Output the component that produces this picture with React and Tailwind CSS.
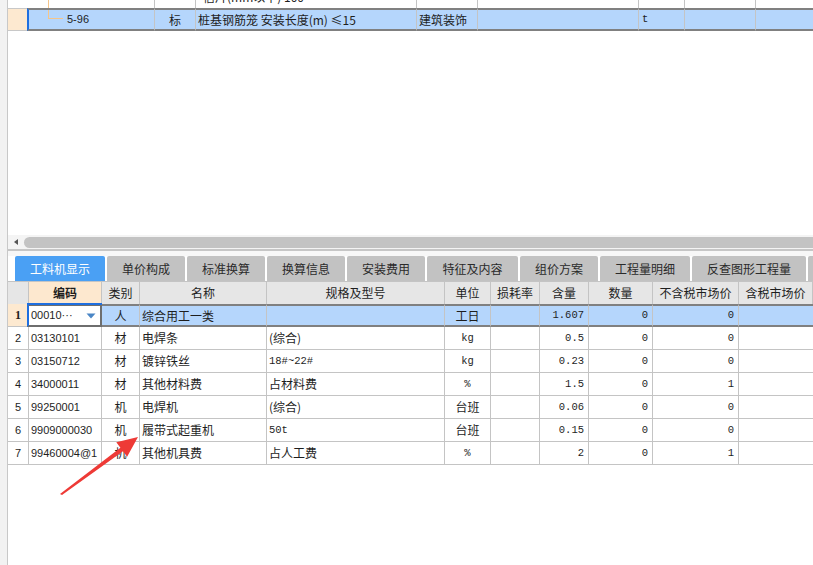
import React from "react";

const cn = "font-['Noto_Sans_CJK_SC',sans-serif] text-[12px] leading-none text-[#1e1e1e]";
const num = "font-['Liberation_Sans',sans-serif] text-[11px] leading-none text-[#1e1e1e]";
const mono = "font-['Liberation_Mono',monospace] text-[10.5px] leading-none text-[#1e1e1e]";

const topCols = "grid grid-cols-[19px_128px_41px_221px_61px_161px_46px_71px_1fr]";
const cols = "grid grid-cols-[21px_73px_38px_127px_178px_46px_49px_49px_64px_86px_1fr]";
const cell = "flex items-center border-r border-[#c4c4c4] overflow-hidden whitespace-nowrap";

const tabs = [
  { label: "工料机显示", w: "w-[90px]", active: true },
  { label: "单价构成", w: "w-[78px]" },
  { label: "标准换算", w: "w-[78px]" },
  { label: "换算信息", w: "w-[78px]" },
  { label: "安装费用", w: "w-[78px]" },
  { label: "特征及内容", w: "w-[91px]" },
  { label: "组价方案", w: "w-[78px]" },
  { label: "工程量明细", w: "w-[90px]" },
  { label: "反查图形工程量", w: "w-[114px]" },
  { label: "", w: "w-[20px]" },
];

const headers = ["", "编码", "类别", "名称", "规格及型号", "单位", "损耗率", "含量", "数量", "不含税市场价", "含税市场价"];

const rows = [
  { no: "2", code: "03130101", type: "材", name: "电焊条", spec: "(综合)", specMono: false, unit: "kg", unitMono: true, qty: "0.5", count: "0", price: "0" },
  { no: "3", code: "03150712", type: "材", name: "镀锌铁丝", spec: "18#~22#", specMono: true, unit: "kg", unitMono: true, qty: "0.23", count: "0", price: "0" },
  { no: "4", code: "34000011", type: "材", name: "其他材料费", spec: "占材料费", specMono: false, unit: "%", unitMono: true, qty: "1.5", count: "0", price: "1" },
  { no: "5", code: "99250001", type: "机", name: "电焊机", spec: "(综合)", specMono: false, unit: "台班", unitMono: false, qty: "0.06", count: "0", price: "0" },
  { no: "6", code: "9909000030", type: "机", name: "履带式起重机", spec: "50t", specMono: true, unit: "台班", unitMono: false, qty: "0.15", count: "0", price: "0" },
  { no: "7", code: "99460004@1", type: "机", name: "其他机具费", spec: "占人工费", specMono: false, unit: "%", unitMono: true, qty: "2", count: "0", price: "1" },
];

const App = () => {
  return (
    <div className="relative w-[813px] h-[565px] overflow-hidden bg-white flex">
      {/* left strip */}
      <div className="w-[8px] shrink-0 bg-[#f2f2f2] border-r border-[#c8c8c8]" />

      <div className="flex-1 flex flex-col min-w-0">
        {/* partial row above */}
        <div className={`${topCols} h-[8px] shrink-0 overflow-hidden`}>
          <div />
          <div className="border-r border-[#c4c4c4] h-full">
            <div className="ml-[21px] h-full border-l border-[#f5c58a]" />
          </div>
          <div className="border-r border-[#c4c4c4]" />
          <div className="border-r border-[#c4c4c4] overflow-hidden">
            <div className={`${cn} ml-[7px] -mt-[9px] whitespace-nowrap`}>信片(mm以下) 100</div>
          </div>
          <div className="border-r border-[#c4c4c4]" />
          <div className="border-r border-[#c4c4c4]" />
          <div className="border-r border-[#c4c4c4]" />
          <div className="border-r border-[#c4c4c4]" />
          <div />
        </div>

        {/* selected row */}
        <div className={`${topCols} h-[23px] shrink-0`}>
          <div className="bg-[#fde9d0] border-y border-[#c8c8c8]" />
          <div className="flex items-start bg-[#b5d6fc] border-y-2 border-y-[#808080] border-l-2 border-l-[#1f6fe0] border-r border-r-[#c4c4c4]">
            <div className="ml-[19px] w-[15px] h-[9px] border-l border-b border-[#f5c58a]" />
            <span className={`${num} ml-[4px] mt-[4px]`}>5-96</span>
          </div>
          <div className={`${cell} justify-center bg-[#b5d6fc] border-y-2 border-y-[#808080]`}>
            <span className={cn}>标</span>
          </div>
          <div className={`${cell} bg-[#b5d6fc] border-y-2 border-y-[#808080] pl-[2px]`}>
            <span className={cn}>桩基钢筋笼 安装长度(m) ≤15</span>
          </div>
          <div className={`${cell} bg-[#b5d6fc] border-y-2 border-y-[#808080] pl-[2px]`}>
            <span className={cn}>建筑装饰</span>
          </div>
          <div className={`${cell} bg-[#b5d6fc] border-y-2 border-y-[#808080]`} />
          <div className={`${cell} bg-[#b5d6fc] border-y-2 border-y-[#808080] pl-[3px]`}>
            <span className={mono}>t</span>
          </div>
          <div className={`${cell} bg-[#b5d6fc] border-y-2 border-y-[#808080]`} />
          <div className="bg-[#b5d6fc] border-y-2 border-y-[#808080]" />
        </div>

        <div className="h-[204px] shrink-0" />

        {/* horizontal scrollbar */}
        <div className="h-[14px] shrink-0 bg-[#f4f4f4] flex items-center">
          <svg width="12" height="10" viewBox="0 0 12 10" className="ml-[3px] shrink-0">
            <path d="M3 5 L7 2 L7 8 Z" fill="#555" />
          </svg>
          <div className="flex-1 h-[11px] ml-[1px] rounded-l-full bg-[#c3c3c3]" />
        </div>
        <div className="h-[2px] shrink-0 bg-[#c6c6c6]" />
        <div className="h-[5px] shrink-0 bg-[#f7f7f7]" />

        {/* tabs */}
        <div className="h-[25px] shrink-0 flex gap-[2px] pl-[7px] bg-white">
          {tabs.map((t, i) => (
            <div
              key={i}
              className={`${t.w} shrink-0 rounded-t-[2px] flex items-center justify-center ${
                t.active ? "bg-[#4aa0f4]" : "bg-[#c2c2c2]"
              }`}
            >
              <span
                className={`font-['Noto_Sans_CJK_SC',sans-serif] text-[12px] leading-none ${
                  t.active ? "text-white" : "text-[#2a2a2a]"
                }`}
              >
                {t.label}
              </span>
            </div>
          ))}
        </div>

        {/* table header */}
        <div className={`${cols} h-[23px] shrink-0 border-t border-[#c4c4c4]`}>
          {headers.map((h, i) => (
            <div
              key={i}
              className={`${cell} justify-center ${i === 1 ? "bg-[#fde8cf]" : "bg-[#e6e6e6]"}`}
            >
              <span className={`${cn} ${i === 1 ? "font-bold" : ""}`}>{h}</span>
            </div>
          ))}
        </div>

        {/* row 1 (selected) */}
        <div className={`${cols} h-[23px] shrink-0`}>
          <div className={`${cell} justify-center bg-[#fde9d0] border-b`}>
            <span className="font-['Liberation_Serif',serif] text-[12px] font-bold leading-none text-[#1e1e1e]">1</span>
          </div>
          <div className="relative -ml-[2px] flex items-center bg-white border-2 border-[#6e6e6e] border-l-[#1f6fe0] pl-[2px]">
            <div className="absolute -top-[3px] -left-[2px] -right-[2px] h-[2px] bg-[#1f6fe0]" />
            <span className={num}>00010···</span>
            <svg width="10" height="6" viewBox="0 0 10 6" className="ml-auto mr-[4px]">
              <path d="M0.5 0.5 L9.5 0.5 L5 5.5 Z" fill="#4a86c6" />
            </svg>
          </div>
          <div className={`${cell} justify-center bg-[#b5d6fc] border-y-2 border-y-[#808080]`}>
            <span className={cn}>人</span>
          </div>
          <div className={`${cell} bg-[#b5d6fc] border-y-2 border-y-[#808080] pl-[2px]`}>
            <span className={cn}>综合用工一类</span>
          </div>
          <div className={`${cell} bg-[#b5d6fc] border-y-2 border-y-[#808080]`} />
          <div className={`${cell} justify-center bg-[#b5d6fc] border-y-2 border-y-[#808080]`}>
            <span className={cn}>工日</span>
          </div>
          <div className={`${cell} bg-[#b5d6fc] border-y-2 border-y-[#808080]`} />
          <div className={`${cell} justify-end pr-[4px] bg-[#b5d6fc] border-y-2 border-y-[#808080]`}>
            <span className={mono}>1.607</span>
          </div>
          <div className={`${cell} justify-end pr-[4px] bg-[#b5d6fc] border-y-2 border-y-[#808080]`}>
            <span className={mono}>0</span>
          </div>
          <div className={`${cell} justify-end pr-[4px] bg-[#b5d6fc] border-y-2 border-y-[#808080]`}>
            <span className={mono}>0</span>
          </div>
          <div className="bg-[#b5d6fc] border-y-2 border-y-[#808080]" />
        </div>

        {/* other rows */}
        {rows.map((r) => (
          <div key={r.no} className={`${cols} h-[23px] shrink-0 border-b border-[#c4c4c4]`}>
            <div className={`${cell} justify-center`}>
              <span className={num}>{r.no}</span>
            </div>
            <div className={`${cell} pl-[2px]`}>
              <span className={num}>{r.code}</span>
            </div>
            <div className={`${cell} justify-center`}>
              <span className={cn}>{r.type}</span>
            </div>
            <div className={`${cell} pl-[2px]`}>
              <span className={cn}>{r.name}</span>
            </div>
            <div className={`${cell} pl-[2px]`}>
              <span className={r.specMono ? mono : cn}>{r.spec}</span>
            </div>
            <div className={`${cell} justify-center`}>
              <span className={r.unitMono ? mono : cn}>{r.unit}</span>
            </div>
            <div className={cell} />
            <div className={`${cell} justify-end pr-[4px]`}>
              <span className={mono}>{r.qty}</span>
            </div>
            <div className={`${cell} justify-end pr-[4px]`}>
              <span className={mono}>{r.count}</span>
            </div>
            <div className={`${cell} justify-end pr-[4px]`}>
              <span className={mono}>{r.price}</span>
            </div>
            <div />
          </div>
        ))}

        <div className="flex-1" />
      </div>

      {/* red annotation arrow */}
      <svg
        className="absolute left-0 top-0 pointer-events-none"
        width="813"
        height="565"
        viewBox="0 0 813 565"
      >
        <polygon
          points="60,494 120.4,447.7 116.3,442.3 138,437 127.1,456.7 123,451.3 62,495"
          fill="#ee3a36"
        />
      </svg>
    </div>
  );
};

export default App;
